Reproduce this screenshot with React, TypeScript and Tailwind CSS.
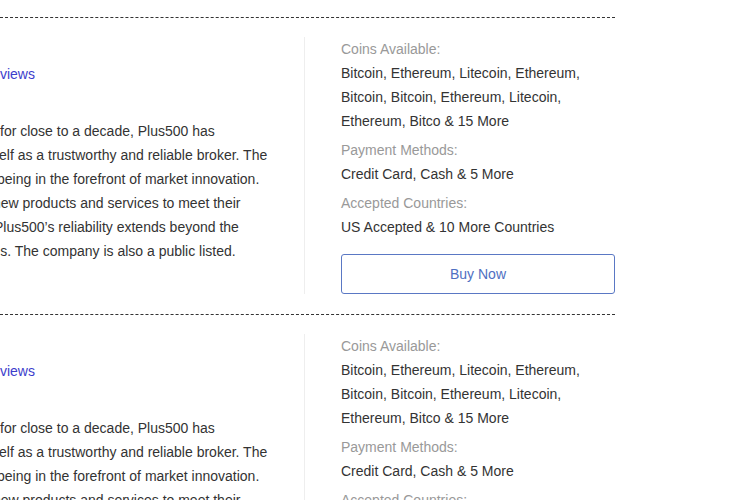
const lines = [
  { text: 'for close to a decade, Plus500 has', cls: 'ml-0' },
  { text: 'itself as a trustworthy and reliable broker. The', cls: '-ml-[15px]' },
  { text: 'being in the forefront of market innovation.', cls: '-ml-[3px]' },
  { text: 'new products and services to meet their', cls: '-ml-[7px]' },
  { text: 'Plus500’s reliability extends beyond the', cls: '-ml-[6px]' },
  { text: 'needs. The company is also a public listed.', cls: '-ml-[31px]' },
]

function Group({ label, value, className = '' }: { label: string; value: string; className?: string }) {
  return (
    <div className={className}>
      <p className="text-[#999]">{label}</p>
      <p className="text-[#333]">{value}</p>
    </div>
  )
}

function BrokerCard() {
  return (
    <article className="flex w-[615px] pt-[19px] pb-5 border-b border-dashed border-[#333]">
      <div className="flex-1 border-r border-[#eeeeee] overflow-hidden pt-[25px]">
        <a href="#" className="block -ml-[18px] text-[#3d3dcc] whitespace-nowrap">
          Reviews
        </a>
        <div className="mt-[33px] text-[#333]">
          {lines.map((l) => (
            <p key={l.text} className={`whitespace-nowrap ${l.cls}`}>
              {l.text}
            </p>
          ))}
        </div>
      </div>
      <div className="w-[310px] pl-9">
        <Group
          label="Coins Available:"
          value="Bitcoin, Ethereum, Litecoin, Ethereum, Bitcoin, Bitcoin, Ethereum, Litecoin, Ethereum, Bitco & 15 More"
        />
        <Group className="mt-[5px]" label="Payment Methods:" value="Credit Card, Cash & 5 More" />
        <Group className="mt-[5px]" label="Accepted Countries:" value="US Accepted & 10 More Countries" />
        <button className="mt-[15px] h-10 w-full border border-[#5a78c4] rounded-[3px] text-[#4f6fc2] bg-white">
          Buy Now
        </button>
      </div>
    </article>
  )
}

export default function App() {
  return (
    <div className="w-[750px] h-[500px] overflow-hidden bg-white font-['Liberation_Sans',Arial,sans-serif] text-[14px] leading-[24px]">
      <div className="w-[615px] h-[18px] border-b border-dashed border-[#333]" />
      <BrokerCard />
      <BrokerCard />
    </div>
  )
}
